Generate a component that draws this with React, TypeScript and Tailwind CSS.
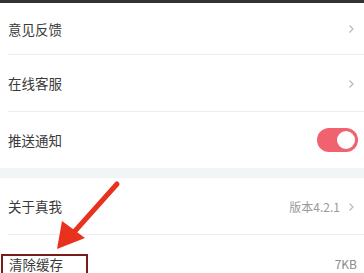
const font = { fontFamily: '"Noto Sans CJK SC", "Noto Sans", sans-serif' };

function Chevron() {
  return (
    <svg width="7" height="10" viewBox="0 0 7 10" className="shrink-0">
      <path d="M1.5 1.5 L5 5 L1.5 8.5" fill="none" stroke="#b8b8b8" strokeWidth="1.2" />
    </svg>
  );
}

function Row({
  label,
  right,
  height = "h-[57px]",
}: {
  label: string;
  right?: React.ReactNode;
  height?: string;
}) {
  return (
    <div className={"relative flex items-center justify-between pl-2 pr-[9px] " + height}>
      <span className="text-[13.5px] text-[#3a3a3a]">{label}</span>
      <div className="flex items-center gap-2">{right}</div>
      <div className="absolute left-2 right-0 bottom-0 h-px bg-[#ececec]" />
    </div>
  );
}

export default function App() {
  return (
    <div className="relative w-[364px] h-[273px] overflow-hidden bg-white" style={font}>
      <div className="h-[3px] bg-[#333333]" />
      <Row label="意见反馈" right={<Chevron />} height="h-[52px]" />
      <Row label="在线客服" right={<Chevron />} />
      <div className="h-[56px] flex items-center justify-between pl-2 pr-[6px]">
        <span className="text-[13.5px] text-[#3a3a3a]">推送通知</span>
        <div className="w-[41px] h-[24px] rounded-full bg-[#f0626e] flex items-center justify-end pr-[3px]">
          <div className="w-[18px] h-[18px] rounded-full bg-white" />
        </div>
      </div>
      <div className="h-[10px] bg-[#f2f5f6]" />
      <Row
        label="关于真我"
        right={
          <>
            <span className="text-[12px] text-[#9a9a9a]">版本4.2.1</span>
            <Chevron />
          </>
        }
      />
      <div className="h-[40px] flex items-start justify-between pr-[7px]">
        <div className="ml-px mt-[19px] w-[87px] h-[40px] border-2 border-[#7b1c1c] pl-[6px]">
          <span className="block text-[13.5px] text-[#3a3a3a] leading-[16px]">清除缓存</span>
        </div>
        <span className="mt-[21px] text-[12px] leading-[16px] text-[#8a8a8a]">7KB</span>
      </div>

      <svg className="absolute left-0 top-0 pointer-events-none" width="364" height="273">
        <line x1="117" y1="184" x2="75" y2="231" stroke="#e8321e" strokeWidth="5" strokeLinecap="round" />
        <polygon points="57,249 62,221 85,238" fill="#e8321e" />
      </svg>
    </div>
  );
}
